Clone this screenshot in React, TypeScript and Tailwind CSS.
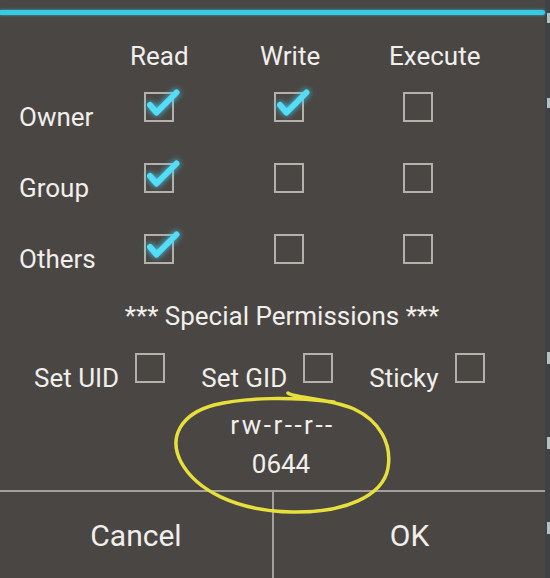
import React from "react";

type Cell = { checked?: boolean };

const rows: { label: string; cells: boolean[] }[] = [
  { label: "Owner", cells: [true, true, false] },
  { label: "Group", cells: [true, false, false] },
  { label: "Others", cells: [true, false, false] },
];

const special = ["Set UID", "Set GID", "Sticky"];

function Box({ checked }: Cell) {
  return (
    <div className="relative h-[30px] w-[30px] shrink-0 border-2 border-[#b4b0ab]">
      {checked && (
        <svg
          className="absolute left-[-2px] top-[-2px] overflow-visible drop-shadow-[0_0_3px_#3fd2f2]"
          width="30"
          height="30"
          viewBox="0 0 30 30"
        >
          <path
            d="M6 13 L12.5 20.5 L32.5 0.5"
            fill="none"
            stroke="#55dcf6"
            strokeWidth="6"
            strokeLinecap="round"
            strokeLinejoin="round"
          />
        </svg>
      )}
    </div>
  );
}

export default function App() {
  return (
    <div className="flex h-[578px] w-[550px] overflow-hidden bg-[#4a4643] font-['Roboto',sans-serif] text-[26px] leading-[30px] text-[#f1efec]">
      <div className="relative flex w-[545px] flex-col">
        <div className="mt-[10px] h-[5px] rounded-r-sm bg-[#37cae2] shadow-[0_0_3px_#2eb6cf]" />

        {/* column headers */}
        <div className="grid grid-cols-[130px_130px_129px_156px] pt-[26px]">
          <div />
          <div>Read</div>
          <div>Write</div>
          <div>Execute</div>
        </div>

        {/* permission rows */}
        <div className="mt-[21px] grid grid-rows-[71px_71px_67px]">
          {rows.map((r) => (
            <div key={r.label} className="grid grid-cols-[130px_130px_129px_156px] items-start">
              <div className="pl-[19px] pt-[10px]">{r.label}</div>
              {r.cells.map((c, i) => (
                <div key={i} className="pl-[14px]">
                  <Box checked={c} />
                </div>
              ))}
            </div>
          ))}
        </div>

        <div className="pl-[19px] text-center">*** Special Permissions ***</div>

        <div className="mt-[22px] flex items-start gap-[36px] pl-[34px]">
          {special.map((s) => (
            <div key={s} className="flex items-start gap-[16px]">
              <span className="pt-[10px]">{s}</span>
              <Box />
            </div>
          ))}
        </div>

        <div className="mt-[17px] pl-[20px] text-center tracking-[2.5px]">rw-r--r--</div>
        <div className="mt-[9px] pl-[17px] text-center">0644</div>

        <div className="mt-[11px] h-[2px] bg-[#a39f9a]" />
        <div className="flex flex-1">
          <button className="w-[272px] self-start pt-[27px] text-[30px] leading-[34px]">Cancel</button>
          <div className="w-[2px] bg-[#a39f9a]" />
          <button className="flex-1 self-start pt-[27px] text-[30px] leading-[34px]">OK</button>
        </div>

        {/* hand-drawn yellow annotation */}
        <svg
          className="pointer-events-none absolute inset-0"
          width="545"
          height="578"
          viewBox="0 0 545 578"
        >
          <path
            d="M288 393 C293 398 328 398 354 409 C380 421 392 444 388 468 C383 496 345 513 292 512 C236 511 196 490 181 462 C168 437 181 414 214 405 C246 397 292 397 334 402"
            fill="none"
            stroke="#e7e03c"
            strokeWidth="3.5"
            strokeLinecap="round"
          />
        </svg>
      </div>

      {/* edge of the screen behind the dialog */}
      <div className="flex w-[5px] flex-col items-end bg-[#3d4345]">
        <div className="mt-[13px] h-[10px] w-[3px] bg-[#b3c1c5]" />
        <div className="mt-[75px] h-[10px] w-[3px] bg-[#b3c1c5]" />
        <div className="mt-[244px] h-[12px] w-[3px] bg-[#b3c1c5]" />
        <div className="mt-[73px] h-[12px] w-[3px] bg-[#b3c1c5]" />
        <div className="mt-[73px] h-[12px] w-[3px] bg-[#b3c1c5]" />
      </div>
    </div>
  );
}
